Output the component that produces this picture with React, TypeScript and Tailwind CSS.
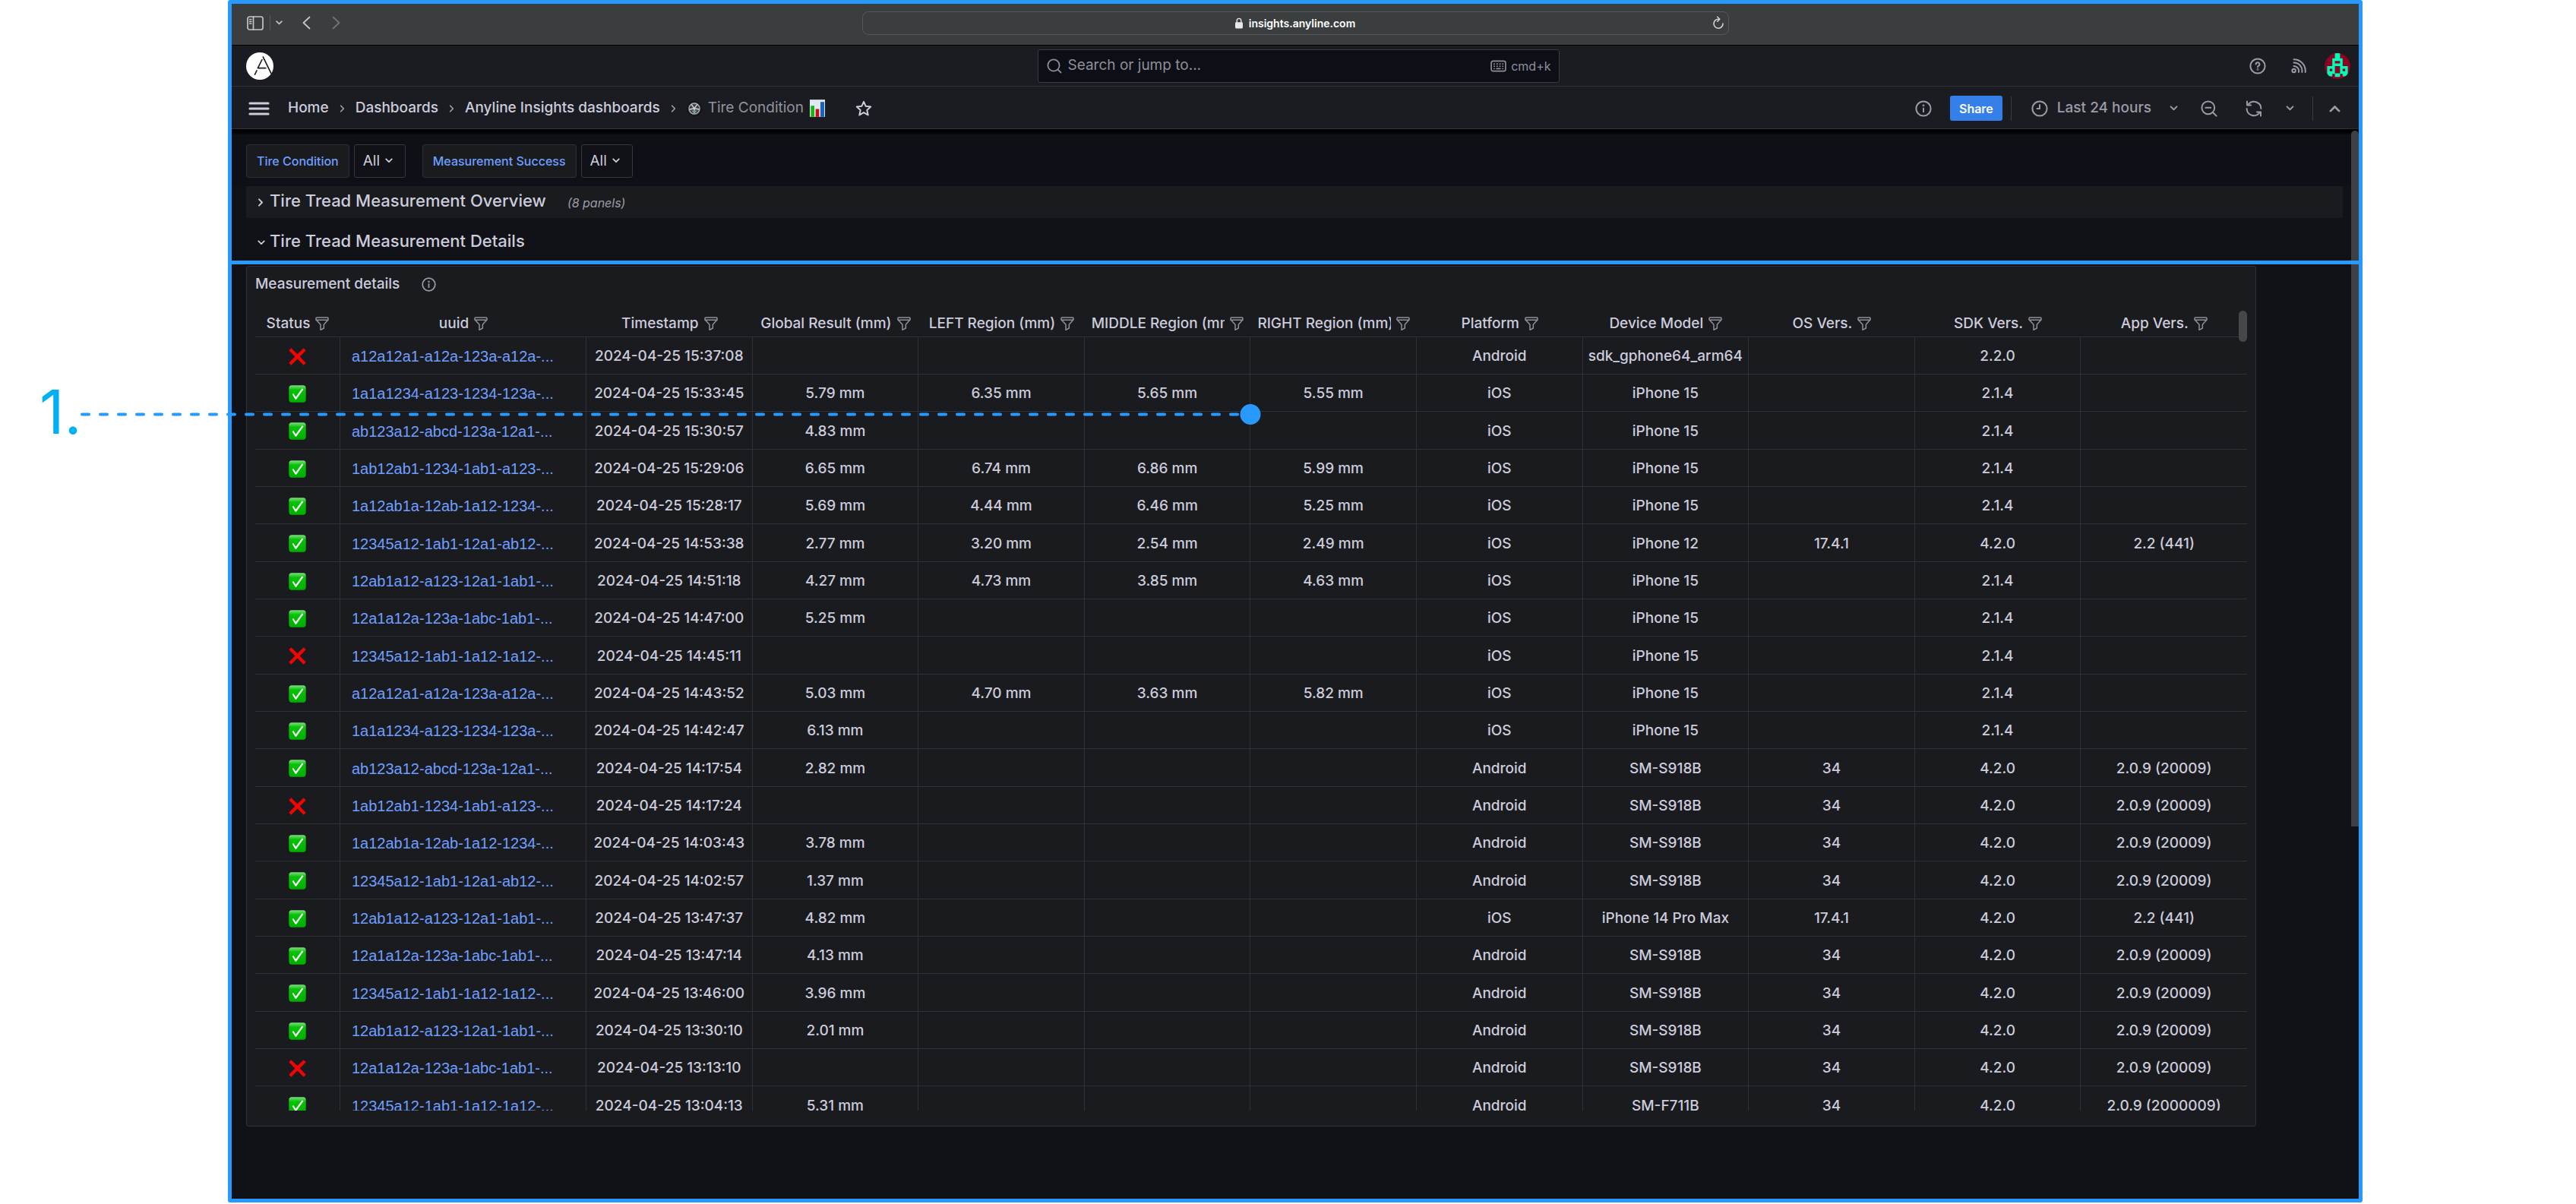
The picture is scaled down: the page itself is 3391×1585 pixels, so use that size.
import React from "react";

type Row = {
  ok: boolean;
  uuid: string;
  time: string;
  results: [string, string, string, string];
  platform: string;
  device: string;
  os: string;
  sdk: string;
  app: string;
};

const none: Row["results"] = ["", "", "", ""];
const only = (v: string): Row["results"] => [v, "", "", ""];

function row(
  ok: boolean,
  uuid: string,
  time: string,
  results: Row["results"],
  platform: string,
  device: string,
  os: string,
  sdk: string,
  app: string,
): Row {
  return { ok, uuid, time: `2024-04-25 ${time}`, results, platform, device, os, sdk, app };
}

const rows: Row[] = [
  row(false, "a12a12a1-a12a-123a-a12a-...", "15:37:08", none, "Android", "sdk_gphone64_arm64", "", "2.2.0", ""),
  row(true, "1a1a1234-a123-1234-123a-...", "15:33:45", ["5.79 mm", "6.35 mm", "5.65 mm", "5.55 mm"], "iOS", "iPhone 15", "", "2.1.4", ""),
  row(true, "ab123a12-abcd-123a-12a1-...", "15:30:57", only("4.83 mm"), "iOS", "iPhone 15", "", "2.1.4", ""),
  row(true, "1ab12ab1-1234-1ab1-a123-...", "15:29:06", ["6.65 mm", "6.74 mm", "6.86 mm", "5.99 mm"], "iOS", "iPhone 15", "", "2.1.4", ""),
  row(true, "1a12ab1a-12ab-1a12-1234-...", "15:28:17", ["5.69 mm", "4.44 mm", "6.46 mm", "5.25 mm"], "iOS", "iPhone 15", "", "2.1.4", ""),
  row(true, "12345a12-1ab1-12a1-ab12-...", "14:53:38", ["2.77 mm", "3.20 mm", "2.54 mm", "2.49 mm"], "iOS", "iPhone 12", "17.4.1", "4.2.0", "2.2 (441)"),
  row(true, "12ab1a12-a123-12a1-1ab1-...", "14:51:18", ["4.27 mm", "4.73 mm", "3.85 mm", "4.63 mm"], "iOS", "iPhone 15", "", "2.1.4", ""),
  row(true, "12a1a12a-123a-1abc-1ab1-...", "14:47:00", only("5.25 mm"), "iOS", "iPhone 15", "", "2.1.4", ""),
  row(false, "12345a12-1ab1-1a12-1a12-...", "14:45:11", none, "iOS", "iPhone 15", "", "2.1.4", ""),
  row(true, "a12a12a1-a12a-123a-a12a-...", "14:43:52", ["5.03 mm", "4.70 mm", "3.63 mm", "5.82 mm"], "iOS", "iPhone 15", "", "2.1.4", ""),
  row(true, "1a1a1234-a123-1234-123a-...", "14:42:47", only("6.13 mm"), "iOS", "iPhone 15", "", "2.1.4", ""),
  row(true, "ab123a12-abcd-123a-12a1-...", "14:17:54", only("2.82 mm"), "Android", "SM-S918B", "34", "4.2.0", "2.0.9 (20009)"),
  row(false, "1ab12ab1-1234-1ab1-a123-...", "14:17:24", none, "Android", "SM-S918B", "34", "4.2.0", "2.0.9 (20009)"),
  row(true, "1a12ab1a-12ab-1a12-1234-...", "14:03:43", only("3.78 mm"), "Android", "SM-S918B", "34", "4.2.0", "2.0.9 (20009)"),
  row(true, "12345a12-1ab1-12a1-ab12-...", "14:02:57", only("1.37 mm"), "Android", "SM-S918B", "34", "4.2.0", "2.0.9 (20009)"),
  row(true, "12ab1a12-a123-12a1-1ab1-...", "13:47:37", only("4.82 mm"), "iOS", "iPhone 14 Pro Max", "17.4.1", "4.2.0", "2.2 (441)"),
  row(true, "12a1a12a-123a-1abc-1ab1-...", "13:47:14", only("4.13 mm"), "Android", "SM-S918B", "34", "4.2.0", "2.0.9 (20009)"),
  row(true, "12345a12-1ab1-1a12-1a12-...", "13:46:00", only("3.96 mm"), "Android", "SM-S918B", "34", "4.2.0", "2.0.9 (20009)"),
  row(true, "12ab1a12-a123-12a1-1ab1-...", "13:30:10", only("2.01 mm"), "Android", "SM-S918B", "34", "4.2.0", "2.0.9 (20009)"),
  row(false, "12a1a12a-123a-1abc-1ab1-...", "13:13:10", none, "Android", "SM-S918B", "34", "4.2.0", "2.0.9 (20009)"),
  row(true, "12345a12-1ab1-1a12-1a12-...", "13:04:13", only("5.31 mm"), "Android", "SM-F711B", "34", "4.2.0", "2.0.9 (2000009)"),
];

const columns = [
  "Status",
  "uuid",
  "Timestamp",
  "Global Result (mm)",
  "LEFT Region (mm)",
  "MIDDLE Region (mm)",
  "RIGHT Region (mm)",
  "Platform",
  "Device Model",
  "OS Vers.",
  "SDK Vers.",
  "App Vers.",
];

type IconProps = { className?: string };

const stroke = {
  fill: "none",
  stroke: "currentColor",
  strokeLinecap: "round" as const,
  strokeLinejoin: "round" as const,
  "aria-hidden": true,
};

const ChevronDown = ({ className }: IconProps) => (
  <svg viewBox="0 0 12 8" className={className} strokeWidth="2.2" {...stroke}>
    <path d="M1.5 1.5 6 6l4.5-4.5" />
  </svg>
);
const ChevronUp = ({ className }: IconProps) => (
  <svg viewBox="0 0 12 8" className={className} strokeWidth="2.2" {...stroke}>
    <path d="M1.5 6.5 6 2l4.5 4.5" />
  </svg>
);
const ChevronRight = ({ className }: IconProps) => (
  <svg viewBox="0 0 8 12" className={className} strokeWidth="2.1" {...stroke}>
    <path d="M1.8 1.5 6.2 6l-4.4 4.5" />
  </svg>
);

const InfoIcon = ({ className }: IconProps) => (
  <svg viewBox="0 0 22 22" className={className} strokeWidth="2" {...stroke}>
    <circle cx="11" cy="11" r="9.6" />
    <path d="M11 10.4v4.8" />
    <circle cx="11" cy="6.8" r="0.5" />
  </svg>
);

const FilterIcon = () => (
  <svg viewBox="0 0 54 54" className="size-[18px] shrink-0 text-[#8f8f9b]" strokeWidth="4.5" {...stroke}>
    <path d="M6 3h42q3 0 3 3v5L34 31v14l-13 7V31L3 11V6q0-3 3-3z" />
    <path d="M4 13h46" />
  </svg>
);

const CheckMark = () => (
  <svg viewBox="0 0 69 69" className="mx-auto size-[23px]" role="img" aria-label="Success">
    <defs>
      <linearGradient id="check-fill" x1="0" y1="0" x2="0" y2="1">
        <stop offset="0" stopColor="#7fdc7f" />
        <stop offset="0.16" stopColor="#38cf38" />
        <stop offset="0.26" stopColor="#05c305" />
        <stop offset="1" stopColor="#00ae00" />
      </linearGradient>
    </defs>
    <rect x="1" y="1" width="67" height="67" rx="11" fill="url(#check-fill)" />
    <path d="M14 36l5-3 9 14L53 13l5 4-28 39h-4z" fill="#fff" />
  </svg>
);

const CrossMark = () => (
  <svg viewBox="0 0 69 69" className="mx-auto size-[23px]" role="img" aria-label="Failure">
    <path d="M10 1 34.500 25 59 1l9 9-24 24.500 24 24.500-9 9-24.500-24.500L10 68l-9-9 24-24.500L1 10z" fill="#f20500" />
  </svg>
);

const Logo = () => (
  <svg viewBox="0 0 110 110" className="size-9" role="img" aria-label="Anyline">
    <circle cx="55" cy="55" r="55" fill="#fff" />
    <g fill="none" stroke="#1b1c21" strokeWidth="5" strokeLinecap="round" strokeLinejoin="round">
      <path d="M68 18l33 67" />
      <path d="M64 29 47 63h32" />
      <path d="M43 73l-8 16" />
    </g>
  </svg>
);

const Avatar = () => (
  <svg viewBox="0 0 100 100" className="size-[34px]" role="img" aria-label="Profile">
    <clipPath id="avatar-clip">
      <circle cx="50" cy="50" r="50" />
    </clipPath>
    <g clipPath="url(#avatar-clip)">
      <rect width="100" height="100" fill="#8a0322" />
      <path
        fill="#00fdb5"
        fillRule="evenodd"
        d="M40 0h20v20h10v30h20v40H70V80H60v12H40V80H30v10H10V50h20V20h10zM40 30h20v10H40zM40 50h20v28H40zM20 60h10v10H20zM70 60h10v10H70z"
      />
    </g>
  </svg>
);

const TireIcon = () => (
  <svg viewBox="0 0 20 20" className="size-5" aria-hidden="true">
    <circle cx="10" cy="10" r="9.3" fill="#292b2d" stroke="#0e0f11" strokeWidth="1.2" />
    <circle cx="10" cy="10" r="7" fill="#3d4445" stroke="#a9afaf" strokeWidth="1.3" />
    <path d="M6.2 4.600l3.800 5 3.800-5M3.600 11l6.400-1.200 6.400 1.200M10 10v6" fill="none" stroke="#d3d7d7" strokeWidth="1.5" />
    <path d="M6.5 12.5h7l-2 3h-3z" fill="#7d8f8c" />
  </svg>
);

const ChartIcon = () => (
  <svg viewBox="0 0 60 68" className="h-[23px] w-5" aria-hidden="true">
    <rect width="60" height="68" fill="#dfe9f2" />
    <rect x="4" y="24" width="14" height="44" fill="#12b912" />
    <rect x="23" y="37" width="14" height="31" fill="#c80d12" />
    <rect x="42" y="9" width="15" height="59" fill="#1762c4" />
  </svg>
);

function BrowserBar() {
  return (
    <div className="grid h-[55px] grid-cols-[1fr_1141px_1fr] items-center border-b border-black bg-[#3b3e3f] px-5 pb-1">
      <div className="flex items-center text-[#c4c5c5]">
        <button aria-label="Show sidebar">
          <svg viewBox="0 0 22 19" className="h-[19px] w-[22px]" strokeWidth="1.7" {...stroke}>
            <rect x="1" y="1" width="20" height="17" rx="2.5" />
            <path d="M8.5 1v17M3.7 4.5h2M3.7 7.3h2M3.7 10h2" />
          </svg>
        </button>
        <span className="ml-2 h-5 w-px bg-[#55585a]" />
        <button aria-label="Tab groups" className="ml-[7px]">
          <ChevronDown className="h-[6px] w-[9px]" />
        </button>
        <button aria-label="Back" className="ml-[26px]">
          <svg viewBox="0 0 11 18" className="h-[18px] w-[11px]" strokeWidth="1.8" {...stroke}>
            <path d="M9.5 1.5 1.5 9l8 7.5" />
          </svg>
        </button>
        <button aria-label="Forward" className="ml-7 text-[#717475]">
          <svg viewBox="0 0 11 18" className="h-[18px] w-[11px]" strokeWidth="1.8" {...stroke}>
            <path d="M1.5 1.5l8 7.5-8 7.5" />
          </svg>
        </button>
      </div>
      <div className="relative flex h-[31px] items-center justify-center gap-2 rounded-lg border border-[#55585b] text-[14px] font-semibold text-white">
        <svg viewBox="0 0 10 15" className="h-[15px] w-[10px]" aria-hidden="true">
          <rect x="0" y="6.3" width="10" height="8.2" rx="1.4" fill="#e8e8e8" />
          <path d="M2.2 7V4.2a2.8 2.8 0 0 1 5.6 0V7" fill="none" stroke="#e8e8e8" strokeWidth="1.4" />
        </svg>
        <span>insights.anyline.com</span>
        <button aria-label="Reload" className="absolute right-[5px] text-[#d2d3d3]">
          <svg viewBox="0 0 16 18" className="h-[18px] w-4" strokeWidth="1.6" {...stroke}>
            <path d="M8.5 4.2A6 6 0 1 0 14 10" />
            <path d="M6.8 1.2 9.8 4.2 6.8 7.2" />
          </svg>
        </button>
      </div>
    </div>
  );
}

function TopNav() {
  return (
    <header className="grid h-[54px] grid-cols-[1fr_687px_1fr] items-center border-b border-[#303136] bg-[#1b1c21] pr-[11px] pl-[19px]">
      <a href="#home" className="justify-self-start">
        <Logo />
      </a>
      <label className="flex h-11 items-center rounded-[3px] border border-[#3a3b41] bg-[#0d0f17] pr-[10px] pl-[11px] text-[#8e8e9a]">
        <svg viewBox="0 0 20 20" className="size-5" strokeWidth="1.8" {...stroke}>
          <circle cx="9" cy="9" r="7.6" />
          <path d="M14.6 14.6 18.6 18.6" />
        </svg>
        <input
          type="text"
          aria-label="Search"
          placeholder="Search or jump to..."
          className="ml-2 min-w-0 flex-1 bg-transparent text-[19px] outline-none placeholder:text-[#8e8e9a]"
        />
        <svg viewBox="0 0 22 17" className="mr-1.5 h-4 w-[21px]" strokeWidth="1.8" {...stroke}>
          <rect x="1" y="1.5" width="20" height="14" rx="2.5" />
          <path d="M5 5.5h.4M9 5.5h.4M13 5.5h.4M17 5.5h.2M5 8.7h.4M9 8.7h.4M13 8.7h.4M17 8.7h.2M5 12h.2M8.5 12h5M17 12h.2" />
        </svg>
        <span className="text-[16px]">cmd+k</span>
      </label>
      <div className="flex items-center justify-end text-[#9b9ba7]">
        <button aria-label="Help">
          <svg viewBox="0 0 22 22" className="size-[22px]" strokeWidth="2" {...stroke}>
            <circle cx="11" cy="11" r="9.6" />
            <path d="M8.6 8.6a2.4 2.4 0 1 1 3.5 2.1c-.8.4-1.1.8-1.1 1.6" />
            <circle cx="11" cy="15.4" r="0.4" />
          </svg>
        </button>
        <button aria-label="News" className="ml-[33px]">
          <svg viewBox="0 0 20 20" className="size-5" strokeWidth="2" {...stroke}>
            <circle cx="3.6" cy="16" r="2.2" />
            <path d="M3.5 9.9a6.4 6.4 0 0 1 6.4 8M3.5 5.5a10.6 10.6 0 0 1 10.8 12.4M3.5 1.3a15 15 0 0 1 15.2 16.6" />
          </svg>
        </button>
        <button aria-label="Profile" className="ml-6">
          <Avatar />
        </button>
      </div>
    </header>
  );
}

function Toolbar() {
  return (
    <div className="flex h-14 items-center border-b border-[#303136] bg-[#1b1c21] pt-0.5 pr-6 pl-[22px] text-[19px] text-[#ccccdc]">
      <button aria-label="Open menu">
        <svg viewBox="0 0 28 18" className="h-[18px] w-7" strokeWidth="3.2" {...stroke}>
          <path d="M2 2h24M2 9h24M2 16h24" />
        </svg>
      </button>
      <nav aria-label="Breadcrumbs" className="ml-6 flex items-center gap-[14px] font-medium">
        <a href="#home">Home</a>
        <ChevronRight className="h-2.5 w-[7px] text-[#9b9ba7]" />
        <a href="#dashboards">Dashboards</a>
        <ChevronRight className="h-2.5 w-[7px] text-[#9b9ba7]" />
        <a href="#insights">Anyline Insights dashboards</a>
        <ChevronRight className="h-2.5 w-[7px] text-[#9b9ba7]" />
        <span className="flex items-center gap-2 font-normal text-[#92929e]">
          <TireIcon />
          Tire Condition
          <ChartIcon />
        </span>
      </nav>
      <button aria-label="Mark as favorite" className="ml-10">
        <svg viewBox="0 0 22 22" className="size-[22px]" strokeWidth="2" {...stroke}>
          <path d="M11 1.8l2.7 6 6.5.7-4.9 4.4 1.4 6.5L11 16.1l-5.7 3.3 1.4-6.5L1.8 8.5l6.5-.7z" />
        </svg>
      </button>
      <div className="ml-auto flex items-center text-[#9b9ba7]">
        <button aria-label="Dashboard insights">
          <InfoIcon className="size-[22px]" />
        </button>
        <button className="ml-6 h-[33px] rounded-[3px] bg-[#3480e8] px-3 text-[16px] font-semibold text-white">
          Share
        </button>
        <span className="ml-[11px] h-8 w-px bg-[#3b3c42]" />
        <button className="ml-[26px] flex items-center font-medium">
          <svg viewBox="0 0 22 22" className="mr-3 size-[22px]" strokeWidth="2" {...stroke}>
            <circle cx="11" cy="11" r="9.6" />
            <path d="M11 6v5H7.6" />
          </svg>
          Last 24 hours
          <ChevronDown className="ml-6 h-[7px] w-[11px]" />
        </button>
        <button aria-label="Zoom out" className="ml-[30px]">
          <svg viewBox="0 0 22 22" className="size-[22px]" strokeWidth="2" {...stroke}>
            <circle cx="9.8" cy="9.8" r="8.4" />
            <path d="M16 16l4.6 4.6M6.4 9.8h6.8" />
          </svg>
        </button>
        <button aria-label="Refresh" className="ml-[37px]">
          <svg viewBox="0 0 22 22" className="size-[22px]" strokeWidth="2" {...stroke}>
            <path d="M20.4 11A9.3 9.3 0 0 0 3.4 6M2 1.6V6.4h5" />
            <path d="M1.6 11a9.3 9.3 0 0 0 17 5M20 20.4v-4.8h-5" />
          </svg>
        </button>
        <button aria-label="Refresh interval" className="ml-[31px]">
          <ChevronDown className="h-[7px] w-[11px]" />
        </button>
        <span className="ml-6 h-8 w-px bg-[#3b3c42]" />
        <button aria-label="Collapse toolbar" className="ml-[21px]">
          <ChevronUp className="h-[10px] w-[15px]" />
        </button>
      </div>
    </div>
  );
}

function Variable({ id, label }: { id: string; label: string }) {
  return (
    <div className="flex h-11 gap-1.5">
      <label
        htmlFor={id}
        className="flex items-center rounded-[3px] border border-[#2e2f34] bg-[#1a1b1f] px-[13px] text-[16px] font-medium text-[#6e9fff]"
      >
        {label}
      </label>
      <div className="relative flex">
        <select
          id={id}
          className="w-[68px] appearance-none rounded-[3px] border border-[#36373d] bg-[#111217] pl-[11px] text-[19px] text-[#ccccdc]"
        >
          <option>All</option>
        </select>
        <ChevronDown className="pointer-events-none absolute top-[18px] right-[17px] h-[7px] w-[10px] text-[#ccccdc]" />
      </div>
    </div>
  );
}

function Cell({ children, last }: { children?: React.ReactNode; last?: boolean }) {
  return (
    <td
      className={
        last ? "border-b border-[#303136] px-0 pt-0.5 pb-0" : "border-r border-b border-[#303136] px-0 pt-0.5 pb-0"
      }
    >
      {children}
    </td>
  );
}

function MeasurementTable() {
  return (
    <div className="relative h-[1057px] overflow-hidden">
      <table className="w-full table-fixed border-separate border-spacing-0 text-center text-[19px] leading-6 font-medium whitespace-nowrap text-[#ccccdc]">
        <colgroup>
          <col className="w-[112px]" />
          <col className="w-[324px]" />
          {columns.slice(2).map((c) => (
            <col key={c} />
          ))}
        </colgroup>
        <thead>
          <tr className="h-[39px]">
            {columns.map((c) => (
              <th key={c} className="border-b border-[#303136] px-[9px] pt-[3px] pb-0 font-medium">
                <div className="flex items-center justify-center gap-[7px]">
                  <span className="min-w-0 overflow-hidden">{c}</span>
                  <button aria-label={`Filter ${c}`} className="shrink-0">
                    <FilterIcon />
                  </button>
                </div>
              </th>
            ))}
          </tr>
        </thead>
        <tbody>
          {rows.map((r) => (
            <tr key={r.time} className="h-[49px] nth-[3n]:h-[50px]">
              <Cell>{r.ok ? <CheckMark /> : <CrossMark />}</Cell>
              <Cell>
                <a
                  href="#measurement"
                  className="block pl-[15px] text-left font-['Liberation_Sans',sans-serif] text-[20px] font-normal text-[#6e9fff]"
                >
                  {r.uuid}
                </a>
              </Cell>
              <Cell>{r.time}</Cell>
              {r.results.map((v, i) => (
                <Cell key={i}>{v}</Cell>
              ))}
              <Cell>{r.platform}</Cell>
              <Cell>{r.device}</Cell>
              <Cell>{r.os}</Cell>
              <Cell>{r.sdk}</Cell>
              <Cell last>{r.app}</Cell>
            </tr>
          ))}
        </tbody>
      </table>
      <div className="absolute top-1 right-0 h-[41px] w-[11px] rounded-full bg-[#46474b]" />
    </div>
  );
}

export default function App() {
  return (
    <div className="relative bg-white pr-[281px] pb-0.5 pl-[300px] font-[Inter,sans-serif]">
      <main className="relative rounded-[3px] border-[5px] border-[#2899ff] bg-[#111217]">
        <BrowserBar />
        <TopNav />
        <Toolbar />

        <div className="bg-linear-to-b from-black via-[#0e1016] via-10% to-[#0e1018] to-90% pt-5 pb-[11px] pl-[19px]">
          <div className="flex gap-[22px]">
            <Variable id="tire-condition" label="Tire Condition" />
            <Variable id="measurement-success" label="Measurement Success" />
          </div>
        </div>

        <div className="pr-[21px] pb-[3px] pl-[19px] text-[#ccccdc]">
          <button className="flex h-[42px] w-full items-center bg-[#1a1b1e] pb-[3px] pl-[15px] text-left text-[22px] font-medium">
            <ChevronRight className="mt-1 mr-2 h-[11px] w-2" />
            Tire Tread Measurement Overview
            <span className="mt-1 ml-7 text-[16px] font-normal text-[#9b9ba7] italic">(8 panels)</span>
          </button>
          <button className="mt-[11px] flex h-[42px] w-full items-center pb-[3px] pl-[15px] text-left text-[22px] font-medium">
            <ChevronDown className="mt-1 mr-[6px] h-[7px] w-[10px]" />
            Tire Tread Measurement Details
          </button>
        </div>

        <div className="h-[5px] bg-[#2899ff]" />

        <div className="pt-0.5 pr-[135px] pb-[95px] pl-[19px]">
          <section className="rounded-[3px] border border-[#303136] bg-[#1a1b1f] px-[11px] pb-5">
            <div className="flex h-[54px] items-center pb-2 text-[19px] text-[#ccccdc]">
              <h2 className="font-medium">Measurement details</h2>
              <button aria-label="Panel description" className="ml-[29px] text-[#9b9ba7]">
                <InfoIcon className="size-[19px]" />
              </button>
            </div>
            <MeasurementTable />
          </section>
        </div>

        <div className="absolute top-[167px] right-0 h-[916px] w-[10px] rounded-t-full bg-[#3f4045]" />
        <div className="absolute top-[338px] right-0 h-[5px] w-[10px] bg-[#2899ff]" />
      </main>

      <div className="absolute top-[502px] left-[52px] text-[80px] leading-[80px] text-[#00b0f5]">1.</div>
      <svg viewBox="0 0 1554 28" className="absolute top-[532px] left-[106px] h-7 w-[1554px]" aria-hidden="true">
        <path
          d="M2 13.5H1540"
          fill="none"
          stroke="#2899ff"
          strokeWidth="4"
          strokeLinecap="round"
          strokeDasharray="9 15"
        />
        <circle cx="1540" cy="13.5" r="13.5" fill="#2899ff" />
      </svg>
    </div>
  );
}
